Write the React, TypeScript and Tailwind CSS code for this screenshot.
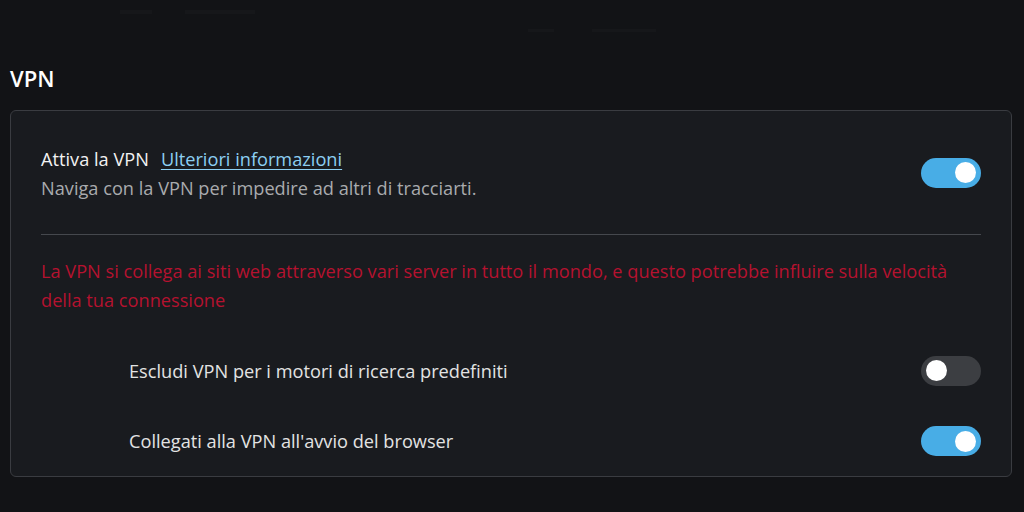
import React from 'react';

function Toggle({ on }: { on: boolean }) {
  return (
    <div
      className={
        on
          ? 'w-[60px] h-[30px] rounded-full bg-[#48ade6] flex items-center justify-end px-[5px] shrink-0'
          : 'w-[60px] h-[30px] rounded-full bg-[#3c3e42] flex items-center justify-start px-[5px] shrink-0'
      }
    >
      <div className="w-[21px] h-[21px] rounded-full bg-white" />
    </div>
  );
}

export default function App() {
  return (
    <div
      className="w-[1024px] h-[512px] bg-[#121316] overflow-hidden text-[18.2px]"
      style={{ fontFamily: '"Open Sans", "Noto Sans", sans-serif' }}
    >
      {/* faint leftovers of the header above */}
      <div className="h-[58px] relative">
        <div className="absolute left-[120px] top-[10px] w-[32px] h-[4px] bg-[#16171a]" />
        <div className="absolute left-[185px] top-[10px] w-[70px] h-[4px] bg-[#16171a]" />
        <div className="absolute left-[528px] top-[29px] w-[26px] h-[3px] bg-[#16171a]" />
        <div className="absolute left-[592px] top-[29px] w-[64px] h-[3px] bg-[#16171a]" />
      </div>

      <h2 className="px-[10px] text-[22px] leading-[40px] font-semibold text-white">VPN</h2>

      <div className="mx-[10px] mt-[12px] w-[1002px] rounded-[6px] border border-[#3a3c41] bg-[#191b1f] px-[30px]">
        <div className="pt-[34px] pb-[31px] flex items-center justify-between">
          <div className="leading-[29px]">
            <div className="flex items-center gap-[12px]">
              <span className="text-[#f2f2f2]">Attiva la VPN</span>
              <a className="text-[#8ccff2] underline underline-offset-[3px]" href="#">
                Ulteriori informazioni
              </a>
            </div>
            <div className="text-[#a9abae]">Naviga con la VPN per impedire ad altri di tracciarti.</div>
          </div>
          <div className="mt-[-3px]">
            <Toggle on />
          </div>
        </div>

        <div className="h-px bg-[#45484d]" />

        <p className="pt-[22px] pb-[20px] leading-[29px] text-[#b5122f]">
          La VPN si collega ai siti web attraverso vari server in tutto il mondo, e questo potrebbe influire sulla velocità
          <br />
          della tua connessione
        </p>

        <div className="h-[71px] flex items-center justify-between pl-[88px]">
          <span className="text-[#e3e3e3] mt-[2px]">Escludi VPN per i motori di ricerca predefiniti</span>
          <Toggle on={false} />
        </div>
        <div className="h-[70px] flex items-center justify-between pl-[88px]">
          <span className="text-[#e3e3e3] mt-[2px]">Collegati alla VPN all'avvio del browser</span>
          <Toggle on />
        </div>
      </div>
    </div>
  );
}
